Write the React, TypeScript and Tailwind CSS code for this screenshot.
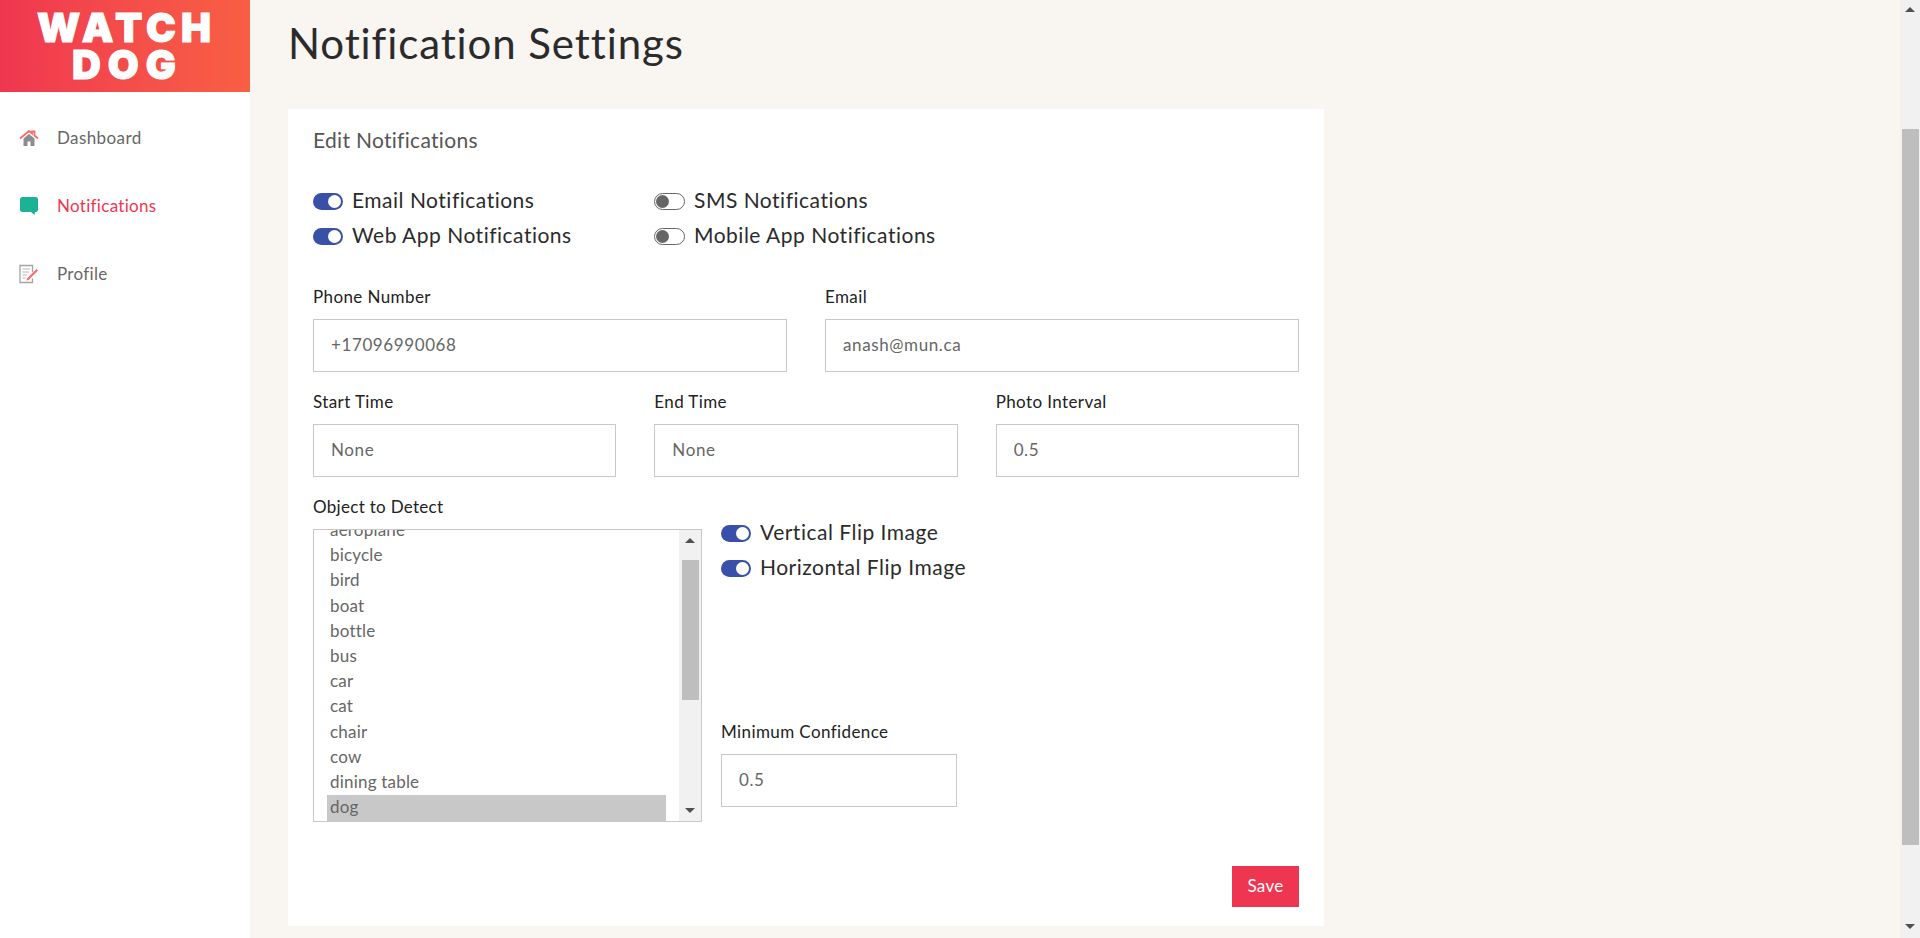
import React from 'react';

const items = ['aeroplane', 'bicycle', 'bird', 'boat', 'bottle', 'bus', 'car', 'cat', 'chair', 'cow', 'dining table'];

function HomeIcon() {
  return (
    <svg width="20" height="20" viewBox="0 0 20 20">
      <path d="M4.5 10.5 10 6l5.500 4.500V18h-4v-4.500h-3V18h-4z" fill="#8c8c8c" />
      <path d="M1 10.500 10 3l3 2.500V3.500h2.500v4l3.500 3" fill="none" stroke="#fb6a6a" strokeWidth="1.8" />
    </svg>
  );
}

function ChatIcon() {
  return (
    <svg width="20" height="20" viewBox="0 0 20 20">
      <path d="M3.500 1h13A2.500 2.500 0 0 1 19 3.500v10a2.500 2.500 0 0 1-2.500 2.500H16l-.5 3-3.500-3H3.500A2.500 2.500 0 0 1 1 13.500v-10A2.500 2.500 0 0 1 3.500 1z" fill="#1ab394" />
    </svg>
  );
}

function ProfileIcon() {
  return (
    <svg width="20" height="20" viewBox="0 0 20 20">
      <path d="M13.500 8V1.500H1v17h12.500v-4" fill="none" stroke="#a3a3a3" strokeWidth="1.3" />
      <path d="M3.500 5h7.500M3.500 8h6.500M3.500 11h4.500M3.500 14h3" stroke="#b5b5b5" strokeWidth="1" />
      <path d="M8 14.500 17.500 5 19 6.500 9.500 16 7.500 16.500z" fill="#fb6a6a" />
    </svg>
  );
}

function Toggle({ on, label }: { on?: boolean; label: string }) {
  return (
    <div className="flex h-[35px] items-center gap-[9px]">
      {on ? (
        <span className="flex h-[17px] w-[30px] items-center justify-end rounded-full bg-[#3850a8] pr-[2px]">
          <span className="h-[13px] w-[13px] rounded-full bg-white" />
        </span>
      ) : (
        <span className="flex h-[17px] w-[31px] items-center rounded-full border border-[#666666] bg-white pl-[1px]">
          <span className="h-[13px] w-[13px] rounded-full bg-[#666666]" />
        </span>
      )}
      <span className="-mt-[3px] whitespace-nowrap text-[21px] text-[#2b2b2b] tracking-[0.5px]">{label}</span>
    </div>
  );
}

function Field({ label, value }: { label: string; value: string }) {
  return (
    <div>
      <label className="block h-6 text-[17px] leading-[23px] text-[#222222] tracking-[0.4px]">{label}</label>
      <input
        readOnly
        value={value}
        className="mt-[10px] block h-[53px] w-full border border-[#c8c8c8] bg-white px-[17px] pb-[2px] text-[17px] text-[#666666] tracking-[0.6px] outline-none"
      />
    </div>
  );
}

export default function App() {
  return (
    <div className="flex h-[938px] overflow-hidden bg-[#f9f6f2] font-['Lato','Noto_Sans',sans-serif]">
      {/* Sidebar */}
      <aside className="h-full w-[250px] shrink-0 bg-white">
        <div className="flex h-[92px] flex-col items-center bg-gradient-to-r from-[#ef3650] to-[#f95f43] pt-[9px] font-['Inter',sans-serif] text-[40px] leading-[37px] font-black text-white [-webkit-text-stroke:1px_white]">
          <div className="pl-[3px] tracking-[5px]">WATCH</div>
          <div className="pl-[5px] tracking-[7px]">DOG</div>
        </div>
        <nav className="pt-[29px]">
          <a className="flex h-[34px] items-center gap-[18px] pl-[19px] text-[17px] text-[#666666] tracking-[0.4px]">
            <HomeIcon />
            Dashboard
          </a>
          <a className="mt-[34px] flex h-[34px] items-center gap-[18px] pl-[19px] text-[17px] text-[#ef3650] tracking-[0.3px]">
            <ChatIcon />
            Notifications
          </a>
          <a className="mt-[34px] flex h-[34px] items-center gap-[18px] pl-[19px] text-[17px] text-[#666666] tracking-[0.3px]">
            <ProfileIcon />
            Profile
          </a>
        </nav>
      </aside>

      {/* Main */}
      <main className="flex-1 pl-[38px] pt-[19px]">
        <h1 className="mb-[42px] text-[42px] leading-[48px] text-[#2b2b2b] tracking-[0.9px]">Notification Settings</h1>

        <div className="h-[817px] w-[1036px] bg-white px-[25px] pt-[19px]">
          <h2 className="mb-[32px] h-6 text-[21px] leading-6 text-[#555555] tracking-[0.3px]">Edit Notifications</h2>

          <div className="mb-[31px] flex">
            <div className="w-[341px]">
              <Toggle on label="Email Notifications" />
              <Toggle on label="Web App Notifications" />
            </div>
            <div>
              <Toggle label="SMS Notifications" />
              <Toggle label="Mobile App Notifications" />
            </div>
          </div>

          <div className="mb-[18px] grid grid-cols-2 gap-x-[38px]">
            <Field label="Phone Number" value="+17096990068" />
            <Field label="Email" value="anash@mun.ca" />
          </div>

          <div className="mb-[18px] grid grid-cols-3 gap-x-[38px]">
            <Field label="Start Time" value="None" />
            <Field label="End Time" value="None" />
            <Field label="Photo Interval" value="0.5" />
          </div>

          <div className="flex gap-[19px]">
            <div className="w-[389px]">
              <label className="block h-6 text-[17px] leading-[23px] text-[#222222] tracking-[0.3px]">Object to Detect</label>
              {/* fake listbox, the native one draws a different scrollbar */}
              <div className="relative mt-[10px] flex h-[293px] overflow-hidden border border-[#c8c8c8] bg-white">
                <div className="flex-1 overflow-hidden px-[13px] text-[17px] text-[#666666] tracking-[0.2px]">
                  <div className="-mt-[12px]">
                    {items.map((item) => (
                      <div key={item} className="h-[25.2px] pl-[3px] leading-[24px]">
                        {item}
                      </div>
                    ))}
                    <div className="h-[27px] bg-[#c8c8c8] pl-[3px] leading-[24px]">dog</div>
                  </div>
                </div>
                <div className="flex w-[22px] shrink-0 flex-col items-center justify-between bg-[#f1f1f1] py-[8px]">
                  <span className="h-0 w-0 border-x-[5px] border-b-[5px] border-x-transparent border-b-[#505050]" />
                  <span className="absolute top-[30px] h-[140px] w-[17px] bg-[#bebebe]" />
                  <span className="h-0 w-0 border-x-[5px] border-t-[5px] border-x-transparent border-t-[#505050]" />
                </div>
              </div>
            </div>

            <div className="w-[260px] pt-[21px]">
              <Toggle on label="Vertical Flip Image" />
              <Toggle on label="Horizontal Flip Image" />
              <div className="mt-[134px] w-[236px]">
                <Field label="Minimum Confidence" value="0.5" />
              </div>
            </div>
          </div>

          <div className="mt-[44px] flex justify-end">
            <button className="h-[41px] w-[67px] bg-[#ef3650] pb-[2px] text-[17px] text-white tracking-[0.3px]">Save</button>
          </div>
        </div>
      </main>

      {/* Page scrollbar */}
      <div className="flex h-full w-[20px] shrink-0 flex-col items-center bg-[#f1f1f1] pt-[7px]">
        <span className="h-0 w-0 border-x-[5px] border-b-[5px] border-x-transparent border-b-[#505050]" />
        <span className="mt-[117px] h-[716px] w-[17px] bg-[#bebebe]" />
        <span className="mt-[79px] h-0 w-0 border-x-[5px] border-t-[5px] border-x-transparent border-t-[#505050]" />
      </div>
    </div>
  );
}
